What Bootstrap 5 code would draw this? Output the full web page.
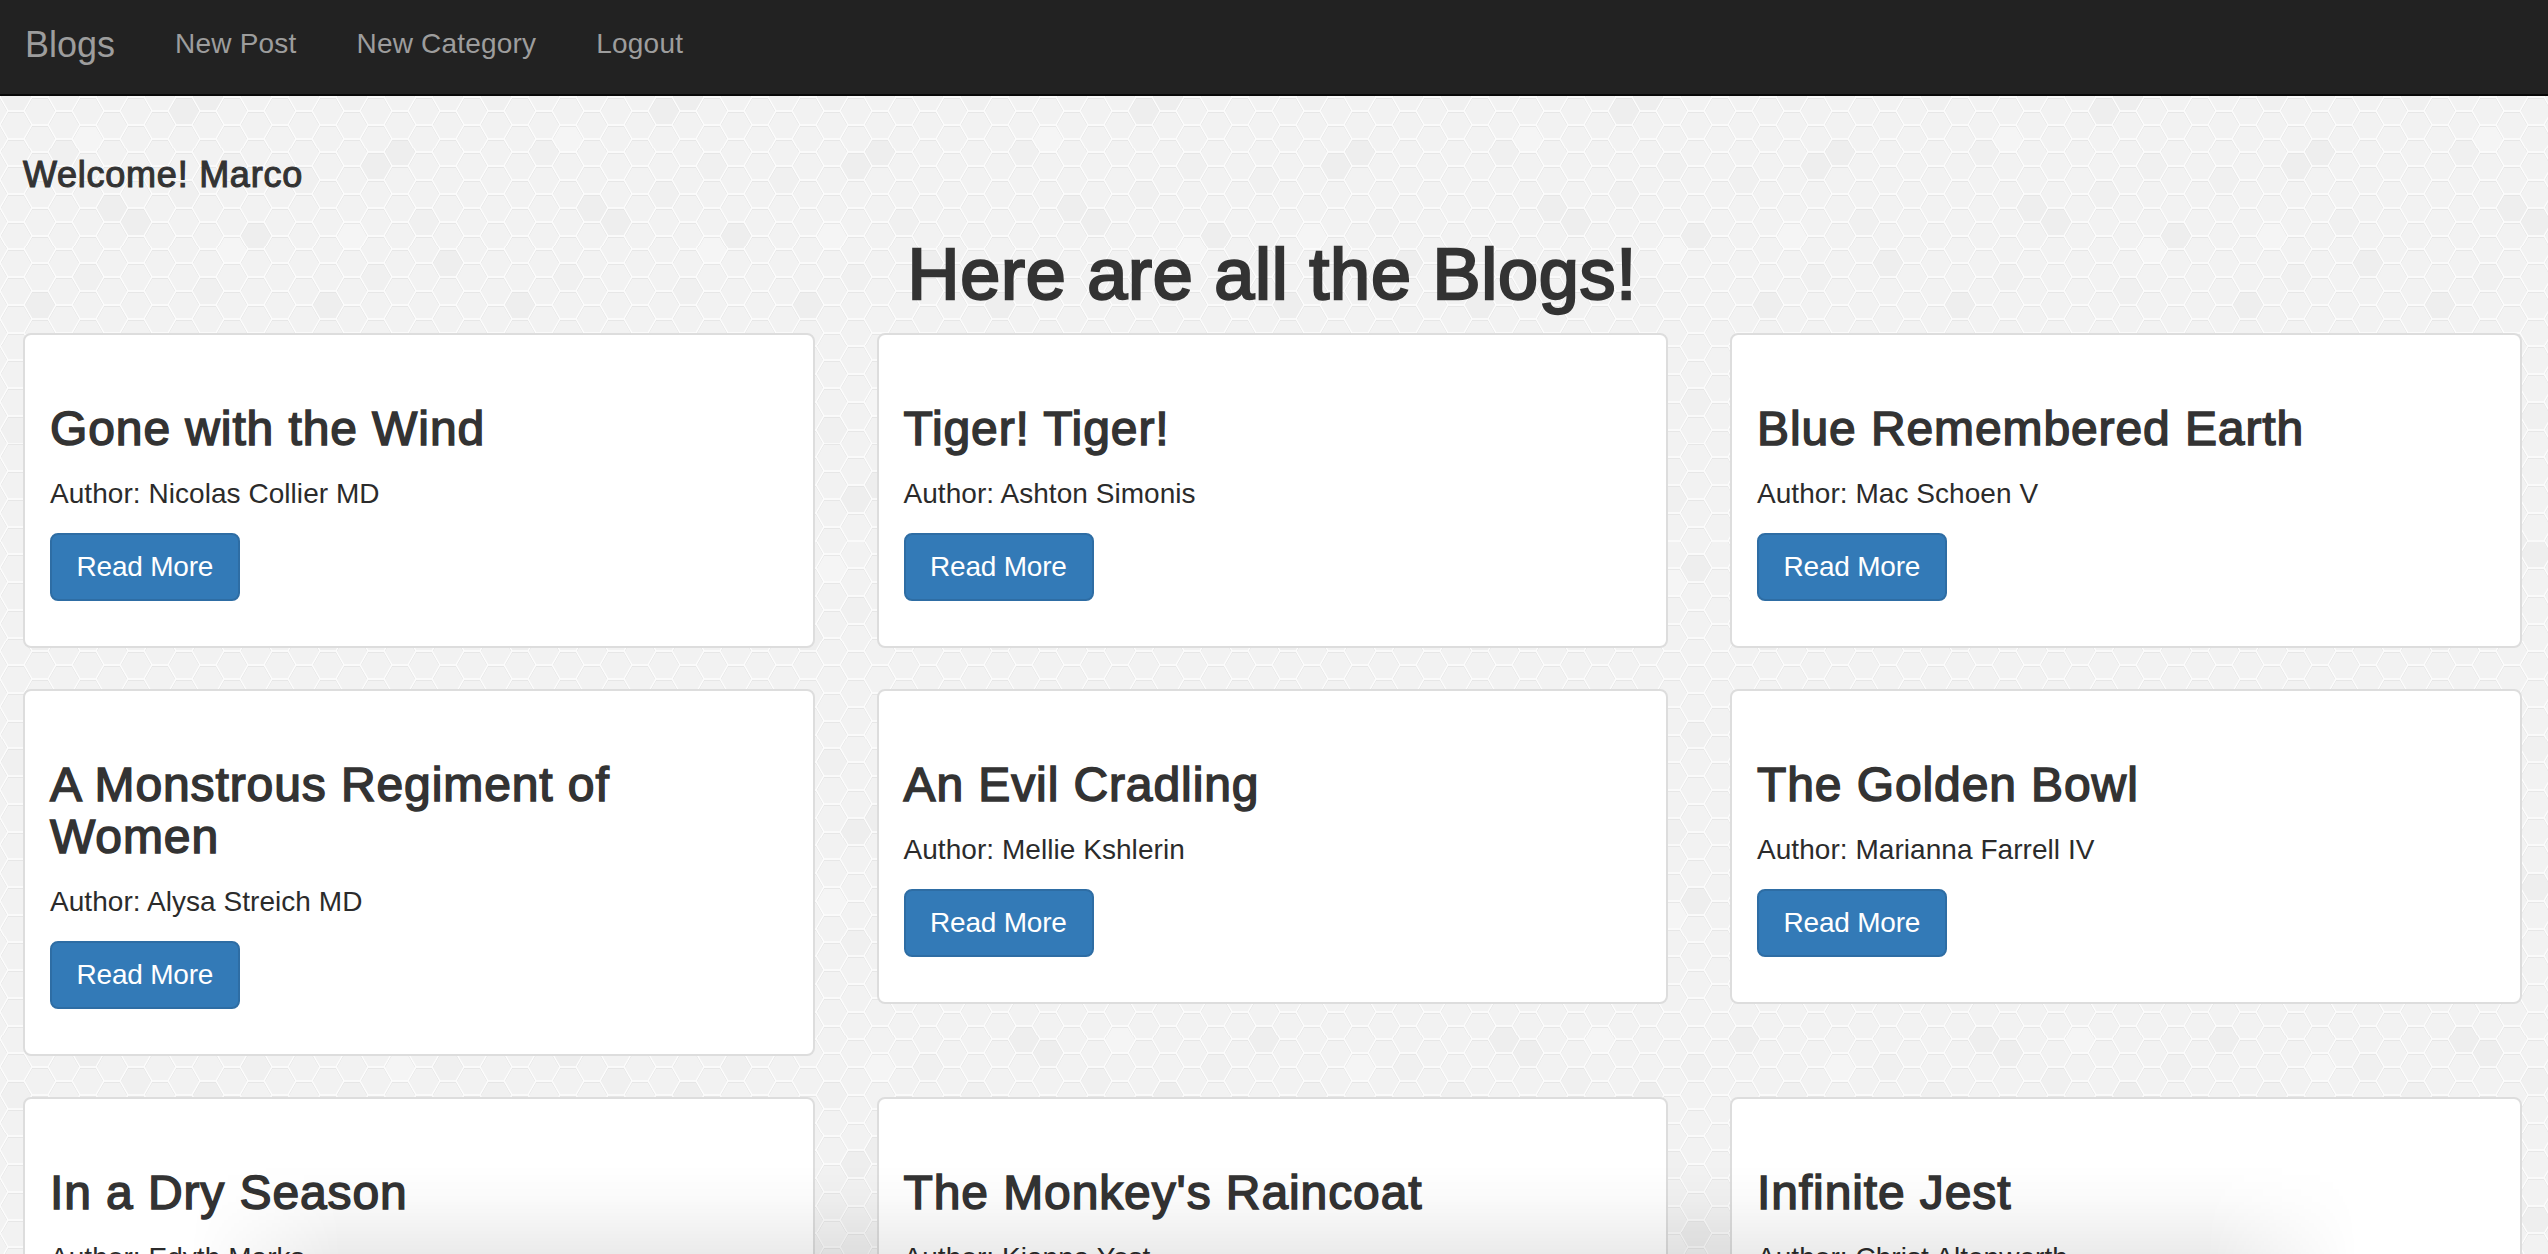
<!DOCTYPE html>
<html lang="en">

<head>
	<meta charset="UTF-8">
	<meta name="viewport" content="width=device-width, initial-scale=1.0">
	<title>Blogs</title>
	<link href="https://cdn.jsdelivr.net/npm/bootstrap@5.3.3/dist/css/bootstrap.min.css" rel="stylesheet"
		crossorigin="anonymous">
	<style>
		html {
			overflow: hidden;
		}

		body {
			font-family: "Liberation Sans", Arial, sans-serif;
			font-size: 28px;
			line-height: 40px;
			color: #333;
			background-color: #f2f2f2;
			background-image:
				url("data:image/svg+xml,%3Csvg xmlns='http://www.w3.org/2000/svg' width='48' height='27.72'%3E%3Cpath d='M0 15.06L8 1.2H24L32 15.06L24 28.92H8ZM32 15.06H48M8 -26.52H24M0 -12.66L8 1.2M24 1.2L32 -12.66' fill='none' stroke='%23e3e3e3' stroke-width='1'/%3E%3Cpath d='M0 13.86L8 0H24L32 13.86L24 27.72H8ZM32 13.86H48' fill='none' stroke='%23fdfdfd' stroke-width='1.3'/%3E%3C/svg%3E"),
				url("data:image/svg+xml,%3Csvg xmlns='http://www.w3.org/2000/svg' xmlns:xlink='http://www.w3.org/1999/xlink' width='480' height='332.64'%3E%3Cdefs%3E%3Cpath id='h' d='M-16 0L-8-13.86H8L16 0L8 13.86H-8Z'/%3E%3C/defs%3E%3Cg fill='%23eeeeee'%3E%3Cuse xlink:href='%23h' x='64' y='41.58'/%3E%3Cuse xlink:href='%23h' x='88' y='55.44'/%3E%3Cuse xlink:href='%23h' x='184' y='110.88'/%3E%3Cuse xlink:href='%23h' x='208' y='97.02'/%3E%3Cuse xlink:href='%23h' x='304' y='41.58'/%3E%3Cuse xlink:href='%23h' x='376' y='166.32'/%3E%3Cuse xlink:href='%23h' x='400' y='152.46'/%3E%3Cuse xlink:href='%23h' x='112' y='207.9'/%3E%3Cuse xlink:href='%23h' x='136' y='221.76'/%3E%3Cuse xlink:href='%23h' x='256' y='235.62'/%3E%3Cuse xlink:href='%23h' x='448' y='263.34'/%3E%3Cuse xlink:href='%23h' x='40' y='304.92'/%3E%3Cuse xlink:href='%23h' x='328' y='304.92'/%3E%3C/g%3E%3Cg fill='%23f0f0f0'%3E%3Cuse xlink:href='%23h' x='16' y='97.02'/%3E%3Cuse xlink:href='%23h' x='136' y='83.16'/%3E%3Cuse xlink:href='%23h' x='256' y='69.3'/%3E%3Cuse xlink:href='%23h' x='352' y='97.02'/%3E%3Cuse xlink:href='%23h' x='448' y='69.3'/%3E%3Cuse xlink:href='%23h' x='64' y='152.46'/%3E%3Cuse xlink:href='%23h' x='184' y='194.04'/%3E%3Cuse xlink:href='%23h' x='304' y='180.18'/%3E%3Cuse xlink:href='%23h' x='424' y='221.76'/%3E%3Cuse xlink:href='%23h' x='208' y='291.06'/%3E%3Cuse xlink:href='%23h' x='376' y='277.2'/%3E%3Cuse xlink:href='%23h' x='88' y='277.2'/%3E%3Cuse xlink:href='%23h' x='232' y='166.32'/%3E%3C/g%3E%3Cg fill='%23f5f5f5'%3E%3Cuse xlink:href='%23h' x='160' y='41.58'/%3E%3Cuse xlink:href='%23h' x='400' y='69.3'/%3E%3Cuse xlink:href='%23h' x='232' y='249.48'/%3E%3Cuse xlink:href='%23h' x='352' y='235.62'/%3E%3Cuse xlink:href='%23h' x='88' y='138.6'/%3E%3C/g%3E%3C/svg%3E");
		}

		.top-bar {
			height: 96px;
			padding: 0;
			background-color: #222;
			border-bottom: 2px solid #080808;
			align-items: flex-start;
			justify-content: flex-start;
		}

		.top-bar .navbar-brand {
			font-size: 36px;
			line-height: 40px;
			color: #9d9d9d;
			margin: 0;
			padding: 25px 30px 0 25px;
		}

		.top-bar .nav-link {
			font-size: 28px;
			line-height: 40px;
			letter-spacing: 0.2px;
			color: #9d9d9d;
			padding: 24px 30px 0 !important;
		}

		.page-wrap {
			padding: 0 26.5px 0 23px;
		}

		.welcome-line {
			font-size: 36px;
			line-height: 40px;
			font-weight: 400;
			letter-spacing: 0.75px;
			-webkit-text-stroke: 1.1px #333;
			margin: 59px 0 40px;
		}

		.page-title {
			font-size: 72px;
			line-height: 79px;
			font-weight: 400;
			letter-spacing: 0.75px;
			-webkit-text-stroke: 2.4px #333;
			text-align: center;
			margin: 0 0 19px;
		}

		.blog-row {
			--bs-gutter-x: 62px;
			--bs-gutter-y: 0;
		}

		.blog-card {
			border: 2px solid #ddd;
			border-radius: 8px;
			margin-bottom: 41px;
			background: #fff;
		}

		.blog-card .card-body {
			padding: 68px 26px 45px 25px;
		}

		.blog-card .card-title {
			font-size: 48px;
			line-height: 52px;
			font-weight: 400;
			letter-spacing: 0.9px;
			-webkit-text-stroke: 1.5px #333;
			margin: 0 0 19px;
		}

		.blog-card .card-text {
			font-size: 28px;
			line-height: 40px;
			letter-spacing: 0.05px;
			color: #2b2b2b;
			margin: 0 0 19px;
		}

		.read-btn {
			font-size: 28px;
			line-height: 40px;
			letter-spacing: -0.2px;
			padding: 12px 25px 12px 24.5px;
			border: 2px solid #2e6da4;
			border-radius: 8px;
			background-color: #337ab7;
			color: #fff;
		}

		.bottom-fade {
			position: fixed;
			left: 190px;
			right: 190px;
			bottom: 0;
			height: 90px;
			background: linear-gradient(to bottom, rgba(0, 0, 0, 0), rgba(0, 0, 0, 0.02) 40%, rgba(0, 0, 0, 0.08));
			-webkit-mask-image: linear-gradient(to right, transparent, #000 7%, #000 93%, transparent);
			mask-image: linear-gradient(to right, transparent, #000 7%, #000 93%, transparent);
			pointer-events: none;
		}
	</style>
	<script src="https://cdn.jsdelivr.net/npm/bootstrap@5.3.3/dist/js/bootstrap.bundle.min.js"
		crossorigin="anonymous"></script>
</head>

<body>
	<nav class="navbar navbar-expand navbar-dark top-bar">
		<a class="navbar-brand" href="#">Blogs</a>
		<ul class="navbar-nav">
			<li class="nav-item"><a class="nav-link" href="#">New Post</a></li>
			<li class="nav-item"><a class="nav-link" href="#">New Category</a></li>
			<li class="nav-item"><a class="nav-link" href="#">Logout</a></li>
		</ul>
	</nav>

	<div class="container-fluid page-wrap">
		<h4 class="welcome-line">Welcome! Marco</h4>
		<h1 class="page-title">Here are all the Blogs!</h1>

		<div class="row blog-row align-items-start">
			<div class="col-4">
				<div class="card blog-card">
					<div class="card-body">
						<h2 class="card-title">Gone with the Wind</h2>
						<p class="card-text">Author: Nicolas Collier MD</p>
						<a href="#" class="btn read-btn">Read More</a>
					</div>
				</div>
			</div>
			<div class="col-4">
				<div class="card blog-card">
					<div class="card-body">
						<h2 class="card-title">Tiger! Tiger!</h2>
						<p class="card-text">Author: Ashton Simonis</p>
						<a href="#" class="btn read-btn">Read More</a>
					</div>
				</div>
			</div>
			<div class="col-4">
				<div class="card blog-card">
					<div class="card-body">
						<h2 class="card-title">Blue Remembered Earth</h2>
						<p class="card-text">Author: Mac Schoen V</p>
						<a href="#" class="btn read-btn">Read More</a>
					</div>
				</div>
			</div>
			<div class="col-4">
				<div class="card blog-card">
					<div class="card-body">
						<h2 class="card-title">A Monstrous Regiment of Women</h2>
						<p class="card-text">Author: Alysa Streich MD</p>
						<a href="#" class="btn read-btn">Read More</a>
					</div>
				</div>
			</div>
			<div class="col-4">
				<div class="card blog-card">
					<div class="card-body">
						<h2 class="card-title">An Evil Cradling</h2>
						<p class="card-text">Author: Mellie Kshlerin</p>
						<a href="#" class="btn read-btn">Read More</a>
					</div>
				</div>
			</div>
			<div class="col-4">
				<div class="card blog-card">
					<div class="card-body">
						<h2 class="card-title">The Golden Bowl</h2>
						<p class="card-text">Author: Marianna Farrell IV</p>
						<a href="#" class="btn read-btn">Read More</a>
					</div>
				</div>
			</div>
			<div class="col-4">
				<div class="card blog-card">
					<div class="card-body">
						<h2 class="card-title">In a Dry Season</h2>
						<p class="card-text">Author: Edyth Marks</p>
						<a href="#" class="btn read-btn">Read More</a>
					</div>
				</div>
			</div>
			<div class="col-4">
				<div class="card blog-card">
					<div class="card-body">
						<h2 class="card-title">The Monkey's Raincoat</h2>
						<p class="card-text">Author: Kianna Yost</p>
						<a href="#" class="btn read-btn">Read More</a>
					</div>
				</div>
			</div>
			<div class="col-4">
				<div class="card blog-card">
					<div class="card-body">
						<h2 class="card-title">Infinite Jest</h2>
						<p class="card-text">Author: Christ Altenwerth</p>
						<a href="#" class="btn read-btn">Read More</a>
					</div>
				</div>
			</div>
		</div>
	</div>

	<div class="bottom-fade"></div>
</body>

</html>
